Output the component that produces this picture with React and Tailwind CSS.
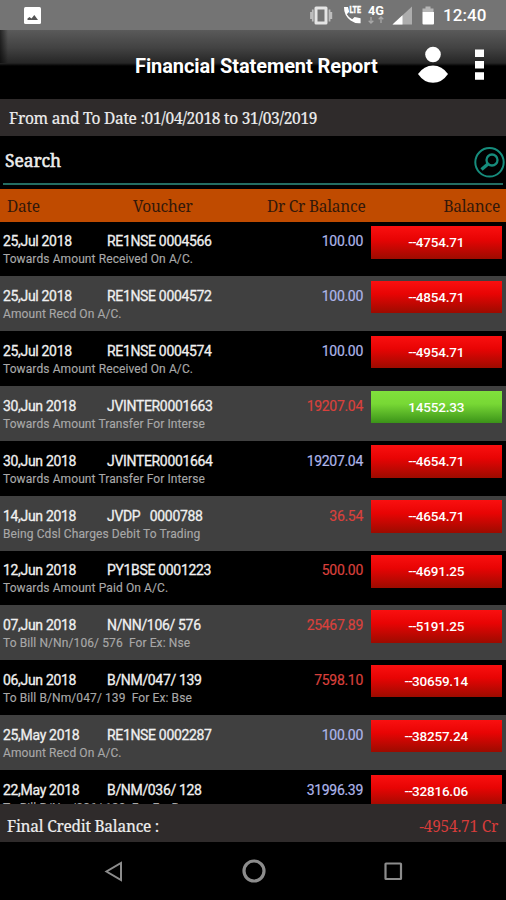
const rows = [
  ["25,Jul 2018", "RE1NSE 0004566", "Towards Amount Received On A/C.", "100.00", "cr", "--4754.71"],
  ["25,Jul 2018", "RE1NSE 0004572", "Amount Recd On A/C.", "100.00", "cr", "--4854.71"],
  ["25,Jul 2018", "RE1NSE 0004574", "Towards Amount Received On A/C.", "100.00", "cr", "--4954.71"],
  ["30,Jun 2018", "JVINTER0001663", "Towards Amount Transfer For Interse", "19207.04", "dr", "14552.33"],
  ["30,Jun 2018", "JVINTER0001664", "Towards Amount Transfer For Interse", "19207.04", "cr", "--4654.71"],
  ["14,Jun 2018", "JVDP   0000788", "Being Cdsl Charges Debit To Trading", "36.54", "dr", "--4654.71"],
  ["12,Jun 2018", "PY1BSE 0001223", "Towards Amount Paid On A/C.", "500.00", "dr", "--4691.25"],
  ["07,Jun 2018", "N/NN/106/ 576", "To Bill N/Nn/106/ 576  For Ex: Nse", "25467.89", "dr", "--5191.25"],
  ["06,Jun 2018", "B/NM/047/ 139", "To Bill B/Nm/047/ 139  For Ex: Bse", "7598.10", "dr", "--30659.14"],
  ["25,May 2018", "RE1NSE 0002287", "Amount Recd On A/C.", "100.00", "cr", "--38257.24"],
  ["22,May 2018", "B/NM/036/ 128", "To Bill B/Nm/036/ 128  For Ex: Bse", "31996.39", "cr", "--32816.06"],
];

const serif = "font-['Noto_Serif','DejaVu_Serif_Condensed','DejaVu_Serif',serif] [font-stretch:condensed]";

function StatusBar() {
  return (
    <div className="flex h-[30px] shrink-0 items-center bg-[#747474] pl-6 pr-[19px] text-white">
      <svg className="h-[17px] w-[17px]" viewBox="0 0 17 17">
        <rect width="17" height="17" rx="1.5" fill="#fff" />
        <path d="M3.500 13v-1.500l2-1.500 2 1.500 2.800-3.500 3.700 5z" fill="#555" />
      </svg>
      <svg className="ml-auto h-[30px] w-[126px]" viewBox="310 0 126 30">
        <path d="M316 6.500h10a1.500 1.500 0 011.500 1.500v15a1.500 1.500 0 01-1.500 1.500h-10a1.500 1.500 0 01-1.500-1.500V8a1.500 1.500 0 011.500-1.500zM317.500 9.500v12h7v-12z" fill="#e4e4e4" fillRule="evenodd" />
        <path d="M312.800 9.500v12M311 12v7M329.500 9.500v12M331.300 12v7" stroke="#bdbdbd" strokeWidth="1.800" />
        <path d="M344 7h4l1.200 4.800-2.400 2.400q2 3.500 5.400 5l2.400-2.200 6 1.300v4.900q-5.500.6-10-2.700-6.800-5.200-6.600-13.500z" fill="#fff" />
        <text x="349.500" y="12.800" fill="#fff" stroke="#fff" strokeWidth="0.300" fontFamily="Roboto, sans-serif" fontSize="8.500" fontWeight="900" textLength="11.500" lengthAdjust="spacingAndGlyphs">LTE</text>
        <text x="368" y="14.600" fill="#fff" fontFamily="Roboto, sans-serif" fontSize="12" fontWeight="700" textLength="16" lengthAdjust="spacingAndGlyphs">4G</text>
        <path d="M371 17v6m-2.300-2.300L371 23l2.300-2.300M381 23v-6m-2.300 2.300L381 17l2.300 2.300" fill="none" stroke="#a8a8a8" strokeWidth="1.300" />
        <path d="M412 6.500V24.500H392.500z" fill="#adadad" />
        <path d="M402.500 15.200v9.300h-10z" fill="#fff" />
        <path d="M422.500 8.500h3V6.500h5v2h3V12h-11z" fill="#b5b5b5" />
        <path d="M422.500 12h11.500v11.500a1 1 0 01-1 1h-9.500a1 1 0 01-1-1z" fill="#fff" />
      </svg>
      <span className="ml-[7px] w-[44px] whitespace-nowrap font-[Roboto,sans-serif] text-[17px] font-medium leading-[32px] tracking-[0.1px]">12:40</span>
    </div>
  );
}

function TitleBar() {
  return (
    <div className="flex h-[68px] shrink-0 bg-[linear-gradient(#5a5a5a_0px,#424242_18px,#262626_33px,#000_36px)]">
      <div className="h-[33px] w-2 bg-gradient-to-r from-black/60 to-transparent" />
      <h1 className="ml-[127px] mt-[22px] whitespace-nowrap font-[Roboto,sans-serif] text-[20px] font-bold leading-7 tracking-[-0.1px] text-white">
        Financial Statement Report
      </h1>
      <svg className="ml-auto h-[68px] w-[88px]" viewBox="418 30 88 68">
        <circle cx="433" cy="54.500" r="7.800" fill="#fff" />
        <path d="M418 74q6-8.500 15-8.500t15 8.500q-6 8.800-15 8.800t-15-8.800z" fill="#fff" />
        <path d="M475 49.500h9v7.500h-9zM475 61h9v7.500h-9zM475 72.300h9v7.500h-9z" fill="#fff" />
      </svg>
    </div>
  );
}

function Row({ row, index }) {
  const [date, voucher, note, amount, kind, balance] = row;
  const green = !balance.startsWith("-");
  return (
    <div className={"flex h-[54.850px] shrink-0 font-[Roboto,sans-serif] " + (index % 2 ? "bg-[#404040]" : "bg-black")}>
      <div className="w-[270px] whitespace-pre pl-[3px] pt-[9.800px]">
        <div className="flex text-[14px] leading-5 text-[#f0f0f0] [-webkit-text-stroke:0.3px]">
          <span className="w-[104px] tracking-[-0.32px]">{date}</span>
          <span className="tracking-[-0.33px]">{voucher}</span>
        </div>
        <div className="pt-px text-[12px] leading-[15px] tracking-[0.1px] text-[#a8a8a8] [-webkit-text-stroke:0.15px]">{note}</div>
      </div>
      <div className={"w-[93px] pt-[9.800px] text-right text-[14px] leading-5 tracking-[-0.3px] [-webkit-text-stroke:0.2px] " + (kind === "cr" ? "text-[#aeb6ea]" : "text-[#d9403c]")}>
        {amount}
      </div>
      <div
        className={
          "ml-[7.500px] mt-[4.600px] h-[32.500px] w-[131.500px] text-center text-[13.500px] font-medium leading-[33px] text-white " +
          (green
            ? "bg-[linear-gradient(#80e03c,#78d835_40%,#3b9319)] tracking-[-0.2px]"
            : "bg-[linear-gradient(#fa1010,#e80404_40%,#9c0b00)]")
        }
      >
        {green ? (
          balance
        ) : (
          <>
            <span className="tracking-[-0.900px]">--</span>
            <span className="tracking-[-0.2px]">{balance.slice(2)}</span>
          </>
        )}
      </div>
    </div>
  );
}

export default function App() {
  return (
    <main className="flex h-[900px] w-[506px] flex-col overflow-hidden bg-black">
      <StatusBar />
      <TitleBar />
      <div className={"mt-px h-[37px] shrink-0 whitespace-nowrap bg-[#2f2b2b] pl-[9px] text-[15.500px] leading-[38px] tracking-[-0.260px] text-[#eee] [-webkit-text-stroke:0.2px] " + serif}>
        From and To Date :01/04/2018 to 31/03/2019
      </div>
      <div className="mx-[3px] flex h-[49px] shrink-0 justify-between border-b-2 border-[#246d62]">
        <span className={"pl-[2px] text-[17.500px] leading-[48px] tracking-[-0.1px] text-[#eee] [-webkit-text-stroke:0.5px] " + serif}>Search</span>
        <svg className="-mr-[3px] h-[47px] w-8" viewBox="474 136 32 47" fill="none" stroke="#168c7c">
          <circle cx="489.500" cy="162.300" r="14.200" strokeWidth="2" />
          <circle cx="492" cy="160" r="5.500" strokeWidth="2.300" />
          <path d="M488 164l-6.500 5.500" strokeWidth="3.500" />
        </svg>
      </div>
      <div className={"mt-[3.500px] flex h-[33px] shrink-0 whitespace-nowrap bg-[#c04b00] pl-[7px] pr-[6px] text-[15.500px] leading-[34px] tracking-[-0.250px] text-[#33180a] " + serif}>
        <span className="w-[126px]">Date</span>
        <span className="w-[134px]">Voucher</span>
        <span>Dr Cr Balance</span>
        <span className="ml-auto">Balance</span>
      </div>
      <div className="flex min-h-0 flex-1 flex-col overflow-hidden">
        {rows.map((row, i) => (
          <Row key={i} row={row} index={i} />
        ))}
      </div>
      <div className={"flex h-[38.500px] shrink-0 justify-between whitespace-nowrap bg-[#2f2b2b] pl-[7px] pr-[8px] text-[15.500px] leading-[45px] tracking-[-0.250px] " + serif}>
        <span className="text-[#eee] [-webkit-text-stroke:0.2px]">Final Credit Balance :</span>
        <span className="text-[#d63c3a]">-4954.71 Cr</span>
      </div>
      <div className="h-[58px] shrink-0">
        <svg className="h-[58px] w-[506px]" viewBox="0 842 506 58" fill="none" stroke="#8c8c8c">
          <path d="M121 863v17l-14.500-8.500z" strokeWidth="2" />
          <circle cx="254" cy="871" r="10" strokeWidth="3.200" />
          <rect x="385.500" y="863.500" width="15.500" height="15.500" rx="0.500" strokeWidth="2.200" />
        </svg>
      </div>
    </main>
  );
}
